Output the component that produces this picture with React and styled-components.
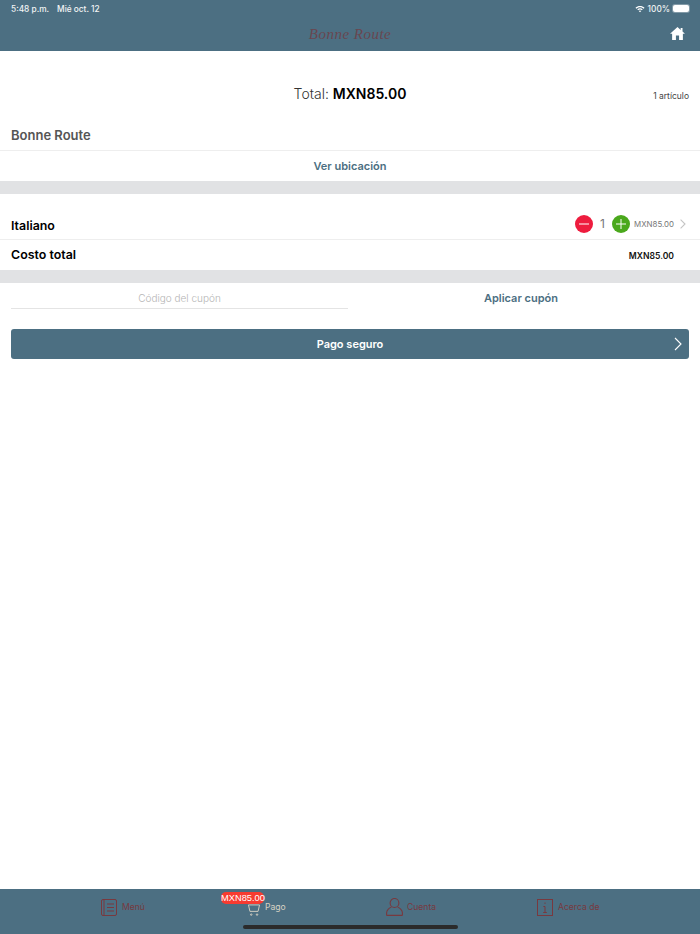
import React from "react"
import styled, { createGlobalStyle } from "styled-components"

const TEAL = "#4c6f82"
const MAROON = "#78393f"

export default function App() {
  return (
    <>
      <GlobalStyle />
      <Page>
        <Header>
          <StatusBar>
            <StatusGroup>
              <span>5:48 p.m.</span>
              <span>Mié oct. 12</span>
            </StatusGroup>
            <StatusRight>
              <svg width="10" height="8" viewBox="0 0 12 9" fill="#fff">
                <path d="M6 1C3.9 1 2 1.8.6 3.1l.9 1C2.7 3 4.3 2.3 6 2.3s3.3.7 4.5 1.8l.9-1C10 1.8 8.1 1 6 1z" />
                <path d="M6 3.6c-1.2 0-2.4.5-3.2 1.3l.9 1c.6-.6 1.4-.9 2.3-.9s1.7.3 2.3.9l.9-1C8.4 4.1 7.2 3.6 6 3.6z" />
                <path d="M6 6.2c-.6 0-1.1.2-1.5.6L6 8.4l1.5-1.6c-.4-.4-.9-.6-1.5-.6z" />
              </svg>
              <span>100%</span>
              <Battery />
            </StatusRight>
          </StatusBar>
          <TitleBar>
            <Logo>Bonne Route</Logo>
            <HomeIcon width="15" height="13" viewBox="0 0 16 14" fill="#fff">
              <path d="M8 0 0 7.2h2.2V14h4.1V9.2h3.4V14h4.1V7.2H16L13.4 4.9V1h-2v2.1z" />
            </HomeIcon>
          </TitleBar>
        </Header>

        <Main>
          <TotalRow>
            <TotalText>
              Total: <strong>MXN85.00</strong>
            </TotalText>
            <ItemCount>1 artículo</ItemCount>
          </TotalRow>
          <StoreRow>Bonne Route</StoreRow>
          <LocationRow>Ver ubicación</LocationRow>
          <Band />
          <ItemRow>
            <ItemName>Italiano</ItemName>
            <ItemControls>
              <RoundButton $color="#ee1c3e" aria-label="quitar">
                <svg width="12" height="12" viewBox="0 0 12 12" stroke="#fff" strokeWidth="1">
                  <path d="M1 6h10" />
                </svg>
              </RoundButton>
              <Quantity>1</Quantity>
              <RoundButton $color="#4aa81c" aria-label="agregar">
                <svg width="12" height="12" viewBox="0 0 12 12" stroke="#fff" strokeWidth="1">
                  <path d="M1 6h10M6 1v10" />
                </svg>
              </RoundButton>
              <ItemPrice>MXN85.00</ItemPrice>
              <svg width="6" height="10" viewBox="0 0 6 10" fill="none" stroke="#c4c4c4" strokeWidth="1.1">
                <path d="M.6.6 5 5 .6 9.4" />
              </svg>
            </ItemControls>
          </ItemRow>
          <CostRow>
            <ItemName>Costo total</ItemName>
            <CostValue>MXN85.00</CostValue>
          </CostRow>
          <Band />
          <CouponRow>
            <CouponInput>Código del cupón</CouponInput>
            <CouponApply>Aplicar cupón</CouponApply>
          </CouponRow>
          <PayButton>
            Pago seguro
            <PayArrow width="8" height="14" viewBox="0 0 8 14" fill="none" stroke="#fff" strokeWidth="1.1">
              <path d="M1 1l6 6-6 6" />
            </PayArrow>
          </PayButton>
        </Main>

        <TabBar>
          <Tab $left={101}>
            <svg width="16" height="17" viewBox="0 0 16 17" fill="none" stroke={MAROON} strokeWidth="1">
              <rect x=".5" y=".5" width="15" height="16" rx="1.5" />
              <path d="M3 .5v16M6 5h7M6 8.5h7M6 12h7" />
            </svg>
            <TabLabel>Menú</TabLabel>
          </Tab>
          <Tab $left={248} $gap={5}>
            <CartIcon width="12" height="12" viewBox="0 0 13 13" fill="none" stroke="#d8d2c4" strokeWidth="1">
              <path d="M.5 1h12l-1.6 7H2.1z" />
              <circle cx="3.5" cy="11.5" r=".8" />
              <circle cx="9.8" cy="11.5" r=".8" />
            </CartIcon>
            <TabLabel $active>Pago</TabLabel>
            <Badge>MXN85.00</Badge>
          </Tab>
          <Tab $left={386} $gap={4}>
            <svg width="17" height="18" viewBox="0 0 17 18" fill="none" stroke={MAROON} strokeWidth="1.1">
              <ellipse cx="8.5" cy="5" rx="4.4" ry="4.5" />
              <path d="M.6 17.4v-2.6c0-3 3-5.2 4.7-5.6M16.4 17.4v-2.6c0-3-3-5.2-4.7-5.6M.6 17.4h15.8" />
            </svg>
            <TabLabel>Cuenta</TabLabel>
          </Tab>
          <Tab $left={537}>
            <svg width="16" height="17" viewBox="0 0 16 17" fill="none" stroke={MAROON} strokeWidth="1">
              <rect x=".5" y=".5" width="15" height="16" />
              <path d="M8 3.5v1.4M6.4 7.5H8v6M6.2 13.5h3.6" />
            </svg>
            <TabLabel>Acerca de</TabLabel>
          </Tab>
          <HomeIndicator />
        </TabBar>
      </Page>
    </>
  )
}

const GlobalStyle = createGlobalStyle`
  html, body {
    margin: 0;
    padding: 0;
    background: #fff;
  }
  * {
    box-sizing: border-box;
  }
`

const Page = styled.div`
  width: 700px;
  height: 934px;
  display: flex;
  flex-direction: column;
  overflow: hidden;
  font-family: "Inter", "Open Sans", sans-serif;
  color: #000;
`

const Header = styled.header`
  height: 51px;
  background: ${TEAL};
  display: flex;
  flex-direction: column;
`

const StatusBar = styled.div`
  height: 16px;
  padding: 1px 11px 0 11px;
  display: flex;
  justify-content: space-between;
  align-items: center;
  color: #f2f4f5;
  font-size: 8.3px;
  font-weight: 500;
`

const StatusGroup = styled.div`
  display: flex;
  gap: 8px;
`

const StatusRight = styled.div`
  display: flex;
  align-items: center;
  gap: 3px;
`

const Battery = styled.div`
  width: 16px;
  height: 7px;
  background: #fff;
  border-radius: 2px;
  box-shadow: 0 0 0 1px rgba(255, 255, 255, 0.3);
`

const TitleBar = styled.div`
  flex: 1;
  position: relative;
  display: flex;
  justify-content: center;
  align-items: center;
  padding-top: 2px;
`

const Logo = styled.div`
  font-family: "Liberation Serif", serif;
  font-style: italic;
  font-size: 15px;
  letter-spacing: 0.5px;
  color: #6f4048;
  opacity: 0.85;
`

const HomeIcon = styled.svg`
  position: absolute;
  right: 15px;
  top: 11px;
`

const Main = styled.main`
  flex: 1;
  display: flex;
  flex-direction: column;
`

const TotalRow = styled.div`
  height: 70px;
  padding: 0 11px;
  display: flex;
  align-items: center;
  justify-content: center;
  position: relative;
`

const TotalText = styled.div`
  font-size: 14px;
  font-weight: 300;
  color: #333;
  margin-top: 14px;

  strong {
    font-weight: 600;
    color: #000;
  }
`

const ItemCount = styled.div`
  position: absolute;
  right: 11px;
  top: 40px;
  font-size: 8.5px;
  color: #444;
`

const StoreRow = styled.div`
  height: 30px;
  padding: 0 11px 2px;
  display: flex;
  align-items: center;
  font-size: 13px;
  font-weight: 600;
  color: #555;
  border-bottom: 1px solid #eeeeee;
`

const LocationRow = styled.div`
  height: 30px;
  display: flex;
  align-items: center;
  justify-content: center;
  font-size: 11px;
  font-weight: 600;
  color: ${TEAL};
`

const Band = styled.div`
  height: 13px;
  background: #e1e2e4;
`

const ItemRow = styled.div`
  height: 46px;
  padding: 18px 11px 0;
  display: flex;
  align-items: center;
  justify-content: space-between;
  border-bottom: 1px solid #eeeeee;
`

const ItemName = styled.div`
  font-size: 12.4px;
  font-weight: 600;
  color: #000;
`

const ItemControls = styled.div`
  display: flex;
  align-items: center;
  margin-top: -4px;
  padding-right: 3px;
`

const RoundButton = styled.button`
  width: 18px;
  height: 18px;
  padding: 0;
  border: none;
  border-radius: 50%;
  background: ${(props) => props.$color};
  display: flex;
  align-items: center;
  justify-content: center;
`

const Quantity = styled.span`
  width: 19px;
  text-align: center;
  font-size: 12px;
  color: #777;
`

const ItemPrice = styled.span`
  margin: 0 6px 0 4px;
  font-size: 7.9px;
  color: #777;
`

const CostRow = styled.div`
  height: 30px;
  padding: 0 26px 2px 11px;
  display: flex;
  align-items: center;
  justify-content: space-between;
`

const CostValue = styled.span`
  margin-top: 4px;
  font-size: 8.6px;
  font-weight: 600;
  color: #111;
`

const CouponRow = styled.div`
  height: 46px;
  padding: 0 11px;
  display: flex;
  align-items: flex-start;
`

const CouponInput = styled.div`
  width: 337px;
  height: 26px;
  padding-top: 4px;
  display: flex;
  align-items: center;
  justify-content: center;
  font-size: 10px;
  font-weight: 300;
  color: #b5b5b5;
  border-bottom: 1px solid #e4e4e4;
`

const CouponApply = styled.div`
  flex: 1;
  height: 30px;
  padding-left: 5px;
  display: flex;
  align-items: center;
  justify-content: center;
  font-size: 11px;
  font-weight: 600;
  color: ${TEAL};
`

const PayButton = styled.button`
  position: relative;
  height: 30px;
  margin: 0 11px;
  border: none;
  border-radius: 3px;
  background: ${TEAL};
  color: #fff;
  font-family: inherit;
  font-size: 11px;
  font-weight: 600;
`

const PayArrow = styled.svg`
  position: absolute;
  right: 7px;
  top: 8px;
`

const TabBar = styled.nav`
  height: 45px;
  margin-top: auto;
  background: ${TEAL};
  position: relative;
`

const Tab = styled.div`
  position: absolute;
  left: ${(props) => props.$left}px;
  top: 8px;
  height: 20px;
  display: flex;
  align-items: center;
  gap: ${(props) => props.$gap || 5}px;
`

const CartIcon = styled.svg`
  margin-top: 5px;
`

const TabLabel = styled.span`
  font-size: 8.6px;
  color: ${(props) => (props.$active ? "#d8d2c4" : MAROON)};
`

const Badge = styled.span`
  position: absolute;
  left: -27px;
  top: -5px;
  width: 43px;
  height: 12px;
  border-radius: 5px;
  background: #f73b30;
  color: #fff;
  font-family: "Liberation Sans", sans-serif;
  font-size: 9.3px;
  line-height: 12px;
  text-align: center;
  white-space: nowrap;
`

const HomeIndicator = styled.div`
  position: absolute;
  left: 243px;
  bottom: 5px;
  width: 215px;
  height: 4px;
  border-radius: 2px;
  background: #2b2b2b;
`
